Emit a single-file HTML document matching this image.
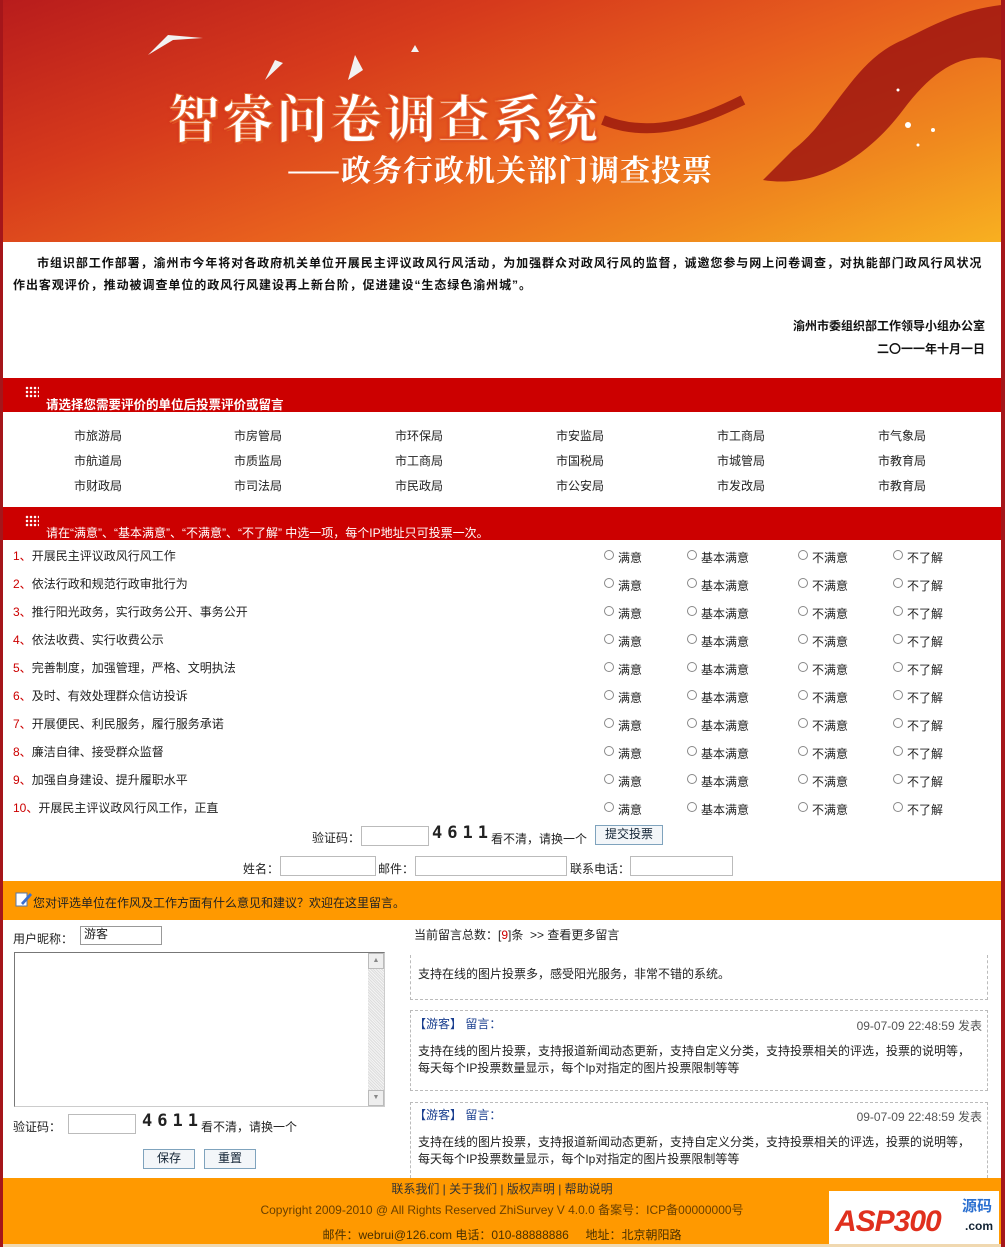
<!DOCTYPE html>
<html><head><meta charset="utf-8"><style>
*{margin:0;padding:0;box-sizing:border-box}
body{width:1005px;height:1247px;background:#a5161a;font-family:"Liberation Sans","Noto Sans CJK SC",sans-serif;font-size:12px;color:#222;position:relative;overflow:hidden}
.a{position:absolute;white-space:nowrap}
#main{position:absolute;left:3px;top:0;width:998px;height:1247px;background:#fff}
.banner{position:absolute;left:0;top:0;width:998px;height:242px;background:linear-gradient(160deg,#b81c1c 0%,#d63a1c 30%,#e8601e 55%,#f08a1e 80%,#f8b020 100%)}
.bar{position:absolute;left:0;width:998px;background:#cc0000;color:#fff}
.dots{position:absolute;width:14px;height:12px;background:radial-gradient(circle,#fff 1px,transparent 1.5px) 0 0/4px 4px}
.inp{position:absolute;border:1px solid #bbb;background:#fff;height:20px}
.r{position:absolute;width:10px;height:10px;border:1px solid #888;border-radius:50%;background:#fff}
.btn{position:absolute;border:1px solid #7fa3bd;background:#f3f6f9;color:#123;text-align:center;font-size:12px}
.msg{position:absolute;left:407px;width:578px;border:1px dashed #bbb}
.blue{color:#1a3f8f}
.cap{position:absolute;font-size:17px;font-weight:bold;letter-spacing:5px;font-family:"DejaVu Sans Mono",monospace}
</style></head><body>
<div id="main">
<div class="banner">
 <svg width="998" height="242" style="position:absolute;left:0;top:0">
  <path d="M790 150 C830 120 850 60 900 40 C940 20 960 10 998 5 L998 60 C960 50 930 70 900 110 C870 150 820 190 760 180 Z" fill="#9a0f0f" opacity="0.8"/>
  <path d="M600 120 C650 140 700 120 740 100" stroke="#8b0a0a" stroke-width="10" fill="none" opacity="0.7"/>
  <g fill="#f2f2f2"><path d="M145 55 L165 35 L200 38 L170 40 Z"/><path d="M262 80 L272 60 L280 63 Z"/><path d="M345 80 L352 55 L360 70 Z"/><path d="M408 52 L412 45 L416 52 Z"/></g>
  <g fill="#fff"><circle cx="905" cy="125" r="3"/><circle cx="930" cy="130" r="2"/><circle cx="895" cy="90" r="1.5"/><circle cx="915" cy="145" r="1.5"/></g>
 </svg>
 <div class="a" style="left:165px;top:78px;font-size:52px;font-weight:bold;color:#fff;letter-spacing:2px;text-shadow:0 0 3px #c22,2px 2px 0 #e05a20;font-family:'Noto Serif CJK SC',serif;-webkit-text-stroke:1px #e86a30">智睿问卷调查系统</div>
 <div class="a" style="left:284px;top:146px;font-size:30px;font-weight:bold;color:#fff;letter-spacing:1px;font-family:'Noto Serif CJK SC',serif">——政务行政机关部门调查投票</div>
</div>
<div class="a" style="left:10px;top:252px;width:975px;white-space:normal;font-weight:bold;font-size:12px;line-height:22px;text-indent:24px;color:#111;letter-spacing:0.95px">市组识部工作部署，渝州市今年将对各政府机关单位开展民主评议政风行风活动，为加强群众对政风行风的监督，诚邀您参与网上问卷调查，对执能部门政风行风状况作出客观评价，推动被调查单位的政风行风建设再上新台阶，促进建设“生态绿色渝州城”。</div>
<div class="a" style="right:16px;top:317px;font-weight:bold;color:#111">渝州市委组织部工作领导小组办公室</div>
<div class="a" style="right:16px;top:340px;font-weight:bold;color:#111">二〇一一年十月一日</div>

<div class="bar" style="top:378px;height:34px"><div class="dots" style="left:22px;top:8px"></div><div class="a" style="left:43px;top:16px;font-weight:bold;font-size:12.5px">请选择您需要评价的单位后投票评价或留言</div></div>
<div class="a" style="left:71px;top:424px;line-height:25px">市旅游局<br>市航道局<br>市财政局</div>
<div class="a" style="left:231px;top:424px;line-height:25px">市房管局<br>市质监局<br>市司法局</div>
<div class="a" style="left:392px;top:424px;line-height:25px">市环保局<br>市工商局<br>市民政局</div>
<div class="a" style="left:553px;top:424px;line-height:25px">市安监局<br>市国税局<br>市公安局</div>
<div class="a" style="left:714px;top:424px;line-height:25px">市工商局<br>市城管局<br>市发改局</div>
<div class="a" style="left:875px;top:424px;line-height:25px">市气象局<br>市教育局<br>市教育局</div>

<div class="bar" style="top:507px;height:33px"><div class="dots" style="left:22px;top:8px"></div><div class="a" style="left:43px;top:17px">请在“满意”、“基本满意”、“不满意”、“不了解” 中选一项，每个IP地址只可投票一次。</div></div>

<div id="qs"></div>
<script>
var q=["开展民主评议政风行风工作","依法行政和规范行政审批行为","推行阳光政务，实行政务公开、事务公开","依法收费、实行收费公示","完善制度，加强管理，严格、文明执法","及时、有效处理群众信访投诉","开展便民、利民服务，履行服务承诺","廉洁自律、接受群众监督","加强自身建设、提升履职水平","开展民主评议政风行风工作，正直"];
var h="";
for(var i=0;i<10;i++){var y=547+i*28;
h+='<div class="a" style="left:10px;top:'+y+'px"><span style="color:#c00">'+(i+1)+'、</span>'+q[i]+'</div>';
[[601,"满意"],[684,"基本满意"],[795,"不满意"],[890,"不了解"]].forEach(function(o){h+='<div class="r" style="left:'+o[0]+'px;top:'+(y+3)+'px"></div><div class="a" style="left:'+(o[0]+14)+'px;top:'+(y+2)+'px">'+o[1]+'</div>';});}
document.getElementById("qs").innerHTML=h;
</script>

<div class="a" style="left:309px;top:829px">验证码：</div><div class="inp" style="left:358px;top:826px;width:68px"></div>
<div class="cap" style="left:429px;top:823px">4611</div>
<div class="a" style="left:488px;top:830px">看不清，请换一个</div>
<div class="btn" style="left:592px;top:825px;width:68px;height:20px;line-height:17px">提交投票</div>
<div class="a" style="left:240px;top:860px">姓名：</div><div class="inp" style="left:277px;top:856px;width:96px"></div>
<div class="a" style="left:375px;top:860px">邮件：</div><div class="inp" style="left:412px;top:856px;width:152px"></div>
<div class="a" style="left:567px;top:860px">联系电话：</div><div class="inp" style="left:627px;top:856px;width:103px"></div>

<div style="position:absolute;left:0;top:881px;width:998px;height:39px;background:#ff9900"></div>
<svg class="a" style="left:12px;top:891px" width="18" height="16"><rect x="1" y="2" width="11" height="13" fill="#fff" stroke="#5577aa"/><path d="M6 12 L15 2 L17 4 L8 14 Z" fill="#3a6fd0"/></svg>
<div class="a" style="left:30px;top:894px;color:#222">您对评选单位在作风及工作方面有什么意见和建议？欢迎在这里留言。</div>

<div class="a" style="left:10px;top:930px">用户昵称：</div>
<div class="inp" style="left:77px;top:926px;width:82px;height:19px;padding-left:3px;line-height:14px;border-color:#999">游客</div>
<div style="position:absolute;left:11px;top:952px;width:371px;height:155px;border:1px solid #777;border-right-color:#ccc;border-bottom-color:#ccc;background:#fff">
 <div style="position:absolute;right:0;top:0;width:16px;height:153px;background:repeating-linear-gradient(45deg,#ddd 0 1px,#f4f4f4 1px 2px)"></div>
 <div style="position:absolute;right:0;top:0;width:16px;height:16px;background:#eee;border:1px solid #bbb;font-size:7px;text-align:center;line-height:14px;color:#888">▲</div>
 <div style="position:absolute;right:0;bottom:0;width:16px;height:16px;background:#eee;border:1px solid #bbb;font-size:7px;text-align:center;line-height:14px;color:#888">▼</div>
</div>
<div class="a" style="left:10px;top:1118px">验证码：</div><div class="inp" style="left:65px;top:1114px;width:68px"></div>
<div class="cap" style="left:139px;top:1111px">4611</div>
<div class="a" style="left:198px;top:1118px">看不清，请换一个</div>
<div class="btn" style="left:140px;top:1149px;width:52px;height:20px;line-height:16px">保存</div>
<div class="btn" style="left:201px;top:1149px;width:52px;height:20px;line-height:16px">重置</div>

<div class="a" style="left:411px;top:926px">当前留言总数：[<span style="color:#c00">9</span>]条 &nbsp;&gt;&gt; 查看更多留言</div>
<div class="msg" style="top:955px;height:45px;border-top:none"><div class="a" style="left:7px;top:10px">支持在线的图片投票多，感受阳光服务，非常不错的系统。</div></div>
<div class="msg" style="top:1010px;height:81px"><div class="a blue" style="left:3px;top:4px">【游客】 留言：</div><div class="a" style="right:5px;top:6px;color:#555">09-07-09 22:48:59 发表</div><div class="a" style="left:7px;top:32px;line-height:17px">支持在线的图片投票，支持报道新闻动态更新，支持自定义分类，支持投票相关的评选，投票的说明等，<br>每天每个IP投票数量显示，每个Ip对指定的图片投票限制等等</div></div>
<div class="msg" style="top:1102px;height:76px;border-bottom:none"><div class="a blue" style="left:3px;top:3px">【游客】 留言：</div><div class="a" style="right:5px;top:5px;color:#555">09-07-09 22:48:59 发表</div><div class="a" style="left:7px;top:31px;line-height:17px">支持在线的图片投票，支持报道新闻动态更新，支持自定义分类，支持投票相关的评选，投票的说明等，<br>每天每个IP投票数量显示，每个Ip对指定的图片投票限制等等</div></div>

<div style="position:absolute;left:0;top:1178px;width:998px;height:66px;background:#ff9900"></div>
<div style="position:absolute;left:0;top:1244px;width:998px;height:3px;background:#f0d8b0"></div>
<div class="a" style="left:0;width:998px;text-align:center;top:1180px;color:#333">联系我们 | 关于我们 | 版权声明 | 帮助说明</div>
<div class="a" style="left:0;width:998px;text-align:center;top:1201px;color:#6a4000">Copyright 2009-2010 @ All Rights Reserved ZhiSurvey V 4.0.0 备案号：ICP备00000000号</div>
<div class="a" style="left:0;width:998px;text-align:center;top:1226px;color:#4a3000">邮件：webrui@126.com 电话：010-88888886 &nbsp;&nbsp;&nbsp; 地址：北京朝阳路</div>
<div style="position:absolute;left:826px;top:1191px;width:170px;height:53px;background:#fff">
 <div class="a" style="left:6px;top:14px;font-size:30px;font-weight:bold;font-style:italic;color:#e0301e;letter-spacing:-1px">ASP300</div>
 <div class="a" style="left:133px;top:4px;font-size:15px;font-weight:bold;color:#2a6fd0">源码</div>
 <div class="a" style="left:136px;top:28px;font-size:12px;font-weight:bold;color:#123">.com</div>
</div>
</div>
</body></html>
